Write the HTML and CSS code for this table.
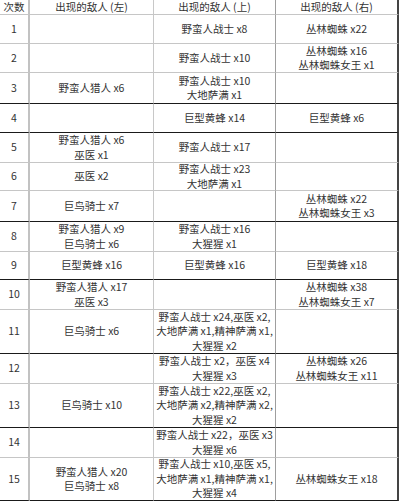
FILE: index.html
```html
<!DOCTYPE html>
<html lang="zh">
<head>
<meta charset="utf-8">
<title>敌人出现表</title>
<link rel="stylesheet" href="styles.css">
</head>
<body>
<div class="grid">
  <div class="row head">
    <div class="cell c1">次数</div>
    <div class="cell c2">出现的敌人 (左)</div>
    <div class="cell c3">出现的敌人 (上)</div>
    <div class="cell c4">出现的敌人 (右)</div>
  </div>
  <div class="row">
    <div class="cell c1">1</div>
    <div class="cell c2"></div>
    <div class="cell c3">野蛮人战士 x8</div>
    <div class="cell c4">丛林蜘蛛 x22</div>
  </div>
  <div class="row">
    <div class="cell c1">2</div>
    <div class="cell c2"></div>
    <div class="cell c3">野蛮人战士 x10</div>
    <div class="cell c4">丛林蜘蛛 x16<br>丛林蜘蛛女王 x1</div>
  </div>
  <div class="row dark">
    <div class="cell c1">3</div>
    <div class="cell c2">野蛮人猎人 x6</div>
    <div class="cell c3">野蛮人战士 x10<br>大地萨满 x1</div>
    <div class="cell c4"></div>
  </div>
  <div class="row dark">
    <div class="cell c1">4</div>
    <div class="cell c2"></div>
    <div class="cell c3">巨型黄蜂 x14</div>
    <div class="cell c4">巨型黄蜂 x6</div>
  </div>
  <div class="row">
    <div class="cell c1">5</div>
    <div class="cell c2">野蛮人猎人 x6<br>巫医 x1</div>
    <div class="cell c3">野蛮人战士 x17</div>
    <div class="cell c4"></div>
  </div>
  <div class="row">
    <div class="cell c1">6</div>
    <div class="cell c2">巫医 x2</div>
    <div class="cell c3">野蛮人战士 x23<br>大地萨满 x1</div>
    <div class="cell c4"></div>
  </div>
  <div class="row dark">
    <div class="cell c1">7</div>
    <div class="cell c2">巨鸟骑士 x7</div>
    <div class="cell c3"></div>
    <div class="cell c4">丛林蜘蛛 x22<br>丛林蜘蛛女王 x3</div>
  </div>
  <div class="row">
    <div class="cell c1">8</div>
    <div class="cell c2">野蛮人猎人 x9<br>巨鸟骑士 x6</div>
    <div class="cell c3">野蛮人战士 x16<br>大猩猩 x1</div>
    <div class="cell c4"></div>
  </div>
  <div class="row dark">
    <div class="cell c1">9</div>
    <div class="cell c2">巨型黄蜂 x16</div>
    <div class="cell c3">巨型黄蜂 x16</div>
    <div class="cell c4">巨型黄蜂 x18</div>
  </div>
  <div class="row">
    <div class="cell c1">10</div>
    <div class="cell c2">野蛮人猎人 x17<br>巫医 x3</div>
    <div class="cell c3"></div>
    <div class="cell c4">丛林蜘蛛 x38<br>丛林蜘蛛女王 x7</div>
  </div>
  <div class="row dark">
    <div class="cell c1">11</div>
    <div class="cell c2">巨鸟骑士 x6</div>
    <div class="cell c3">野蛮人战士 x24,巫医 x2,<br>大地萨满 x1,精神萨满 x1,<br>大猩猩 x2</div>
    <div class="cell c4"></div>
  </div>
  <div class="row">
    <div class="cell c1">12</div>
    <div class="cell c2"></div>
    <div class="cell c3">野蛮人战士 x2，巫医 x4<br>大猩猩 x3</div>
    <div class="cell c4">丛林蜘蛛 x26<br>丛林蜘蛛女王 x11</div>
  </div>
  <div class="row dark">
    <div class="cell c1">13</div>
    <div class="cell c2">巨鸟骑士 x10</div>
    <div class="cell c3">野蛮人战士 x22,巫医 x2,<br>大地萨满 x2,精神萨满 x2,<br>大猩猩 x2</div>
    <div class="cell c4"></div>
  </div>
  <div class="row">
    <div class="cell c1">14</div>
    <div class="cell c2"></div>
    <div class="cell c3">野蛮人战士 x22，巫医 x3<br>大猩猩 x6</div>
    <div class="cell c4"></div>
  </div>
  <div class="row dark">
    <div class="cell c1">15</div>
    <div class="cell c2">野蛮人猎人 x20<br>巨鸟骑士 x8</div>
    <div class="cell c3">野蛮人战士 x10,巫医 x5,<br>大地萨满 x1,精神萨满 x1,<br>大猩猩 x4</div>
    <div class="cell c4">丛林蜘蛛女王 x18</div>
  </div>
</div>
</body>
</html>
```
FILE: styles.css
```css
html, body {
  margin: 0;
  padding: 0;
  background: #ffffff;
}

body {
  font-family: "Noto Sans CJK SC", "Noto Sans", sans-serif;
  font-size: 10.5px;
  color: #333333;
}

.grid {
  display: grid;
  width: 399px;
  grid-template-columns: 30px 124px 122px 123px;
  grid-template-rows: 15px 29px 29px 31px 29px 30px 28px 31px 30px 28px 30px 44px 30px 44px 30px 43px;
}

.row {
  display: contents;
}

.cell {
  box-sizing: border-box;
  display: flex;
  flex-direction: column;
  justify-content: center;
  align-items: center;
  text-align: center;
  line-height: 14.5px;
  white-space: nowrap;
  border-bottom: 1px solid #c6c6c6;
  border-right: 1px solid #c6c6c6;
}

.c1 {
  border-right: 2px solid #c2c2c2;
}

.c2 {
  border-right-color: #c8c8c8;
}

.c3 {
  border-right-color: #9e9e9e;
}

.c4 {
  border-right: 2px solid #444444;
}

.head .cell {
  line-height: 14px;
}

.dark .cell {
  border-bottom-color: #1a1a1a;
}
```
